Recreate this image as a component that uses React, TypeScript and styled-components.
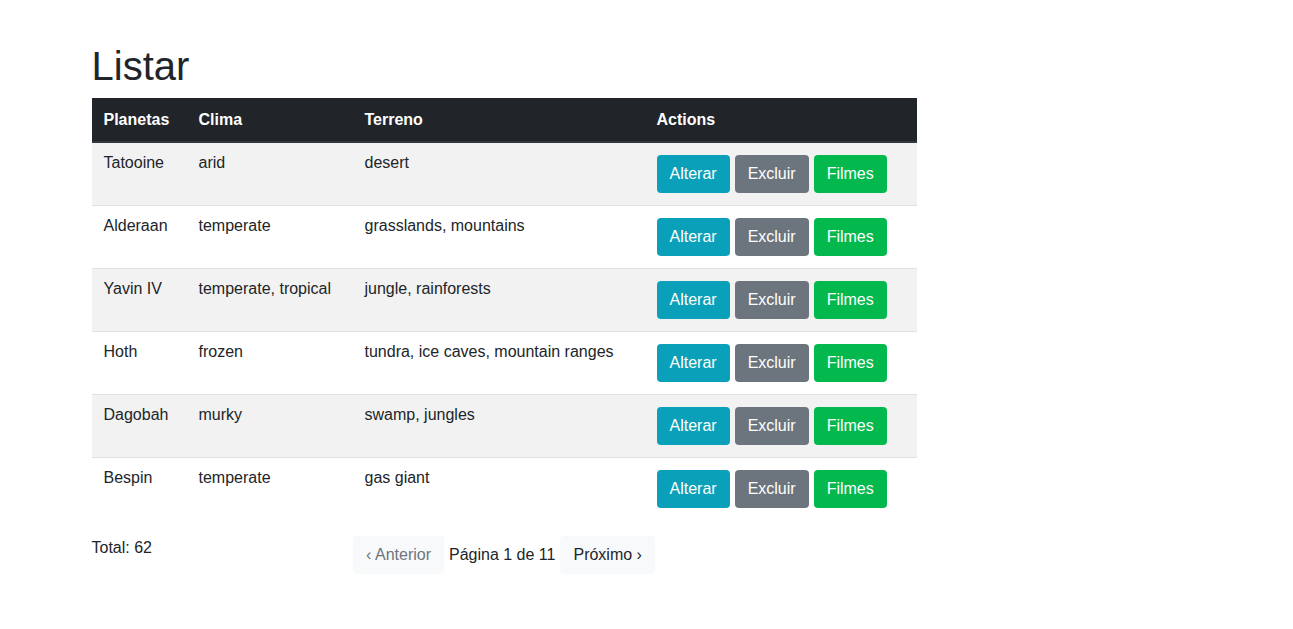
import React from 'react'
import styled, { createGlobalStyle } from 'styled-components'

const GlobalStyle = createGlobalStyle`
  body {
    margin: 0;
    font-family: 'Liberation Sans', Arial, sans-serif;
    font-size: 16px;
    line-height: 1.5;
    color: #212529;
    background: #fff;
  }
  * { box-sizing: border-box; }
`

const Container = styled.div`
  width: 1140px;
  margin: 0 auto;
  padding: 42px 15px 0;
`

const Column = styled.div`
  width: 825px;
`

const Title = styled.h1`
  font-size: 40px;
  font-weight: 400;
  line-height: 1.2;
  margin: 0 0 8px;
`

const Table = styled.table`
  width: 100%;
  border-collapse: collapse;
  margin-bottom: 16px;
`

const Th = styled.th<{ w?: number }>`
  background: #212529;
  color: #fff;
  text-align: left;
  font-weight: 700;
  padding: 10px 12px 9px;
  border-bottom: 2px solid #32383e;
  width: ${p => (p.w ? `${p.w}px` : 'auto')};
`

const Tr = styled.tr<{ striped: boolean }>`
  background: ${p => (p.striped ? '#f2f2f2' : '#fff')};
`

const Td = styled.td`
  padding: 8px 12px;
  vertical-align: top;
  border-top: 1px solid #dee2e6;
`

const Actions = styled.div`
  display: flex;
  gap: 5px;
  padding: 4px 0;
`

const Button = styled.button<{ variant: 'info' | 'secondary' | 'success' }>`
  font-family: inherit;
  font-size: 16px;
  line-height: 24px;
  padding: 6px 12px;
  border-radius: 4px;
  color: #fff;
  border: 1px solid transparent;
  cursor: pointer;
  background: ${p =>
    p.variant === 'info' ? '#0aa0b9' : p.variant === 'secondary' ? '#6c757d' : '#03b94d'};
`

const Footer = styled.div`
  display: grid;
  grid-template-columns: 1fr auto 1fr;
  align-items: start;
`

const Pager = styled.div`
  display: flex;
  align-items: center;
  gap: 5px;
`

const PageButton = styled.button<{ disabled?: boolean }>`
  font-family: inherit;
  font-size: 16px;
  line-height: 24px;
  padding: 6px 12px;
  border: 1px solid #f8f9fa;
  border-radius: 4px;
  background: #f8f9fa;
  color: ${p => (p.disabled ? '#6c757d' : '#212529')};
`

const planets = [
  { name: 'Tatooine', climate: 'arid', terrain: 'desert' },
  { name: 'Alderaan', climate: 'temperate', terrain: 'grasslands, mountains' },
  { name: 'Yavin IV', climate: 'temperate, tropical', terrain: 'jungle, rainforests' },
  { name: 'Hoth', climate: 'frozen', terrain: 'tundra, ice caves, mountain ranges' },
  { name: 'Dagobah', climate: 'murky', terrain: 'swamp, jungles' },
  { name: 'Bespin', climate: 'temperate', terrain: 'gas giant' },
]

const App = () => {
  return (
    <Container>
      <GlobalStyle />
      <Column>
        <Title>Listar</Title>
        <Table>
          <thead>
            <tr>
              <Th w={95}>Planetas</Th>
              <Th w={166}>Clima</Th>
              <Th w={292}>Terreno</Th>
              <Th>Actions</Th>
            </tr>
          </thead>
          <tbody>
            {planets.map((p, i) => (
              <Tr key={p.name} striped={i % 2 === 0}>
                <Td>{p.name}</Td>
                <Td>{p.climate}</Td>
                <Td>{p.terrain}</Td>
                <Td>
                  <Actions>
                    <Button variant="info">Alterar</Button>
                    <Button variant="secondary">Excluir</Button>
                    <Button variant="success">Filmes</Button>
                  </Actions>
                </Td>
              </Tr>
            ))}
          </tbody>
        </Table>
        <Footer>
          <div>Total: 62</div>
          <Pager>
            <PageButton disabled>‹ Anterior</PageButton>
            <span>Página 1 de 11</span>
            <PageButton>Próximo ›</PageButton>
          </Pager>
          <div />
        </Footer>
      </Column>
    </Container>
  )
}

export default App
